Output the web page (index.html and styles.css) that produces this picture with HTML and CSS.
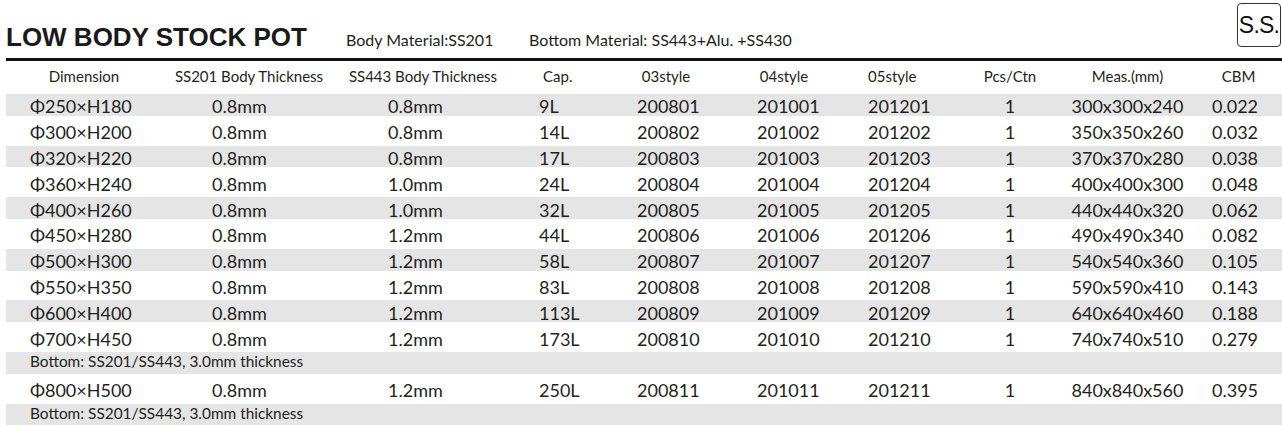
FILE: index.html
```html
<!DOCTYPE html>
<html lang="en">
<head>
    <meta charset="UTF-8">
    <title>Low Body Stock Pot</title>
    <link rel="stylesheet" href="styles.css">
</head>
<body>
    <div class="sheet">
        <!-- title bar -->
        <header class="title-bar">
            <h1 class="title">LOW BODY STOCK POT</h1>
            <span class="spec spec-body">Body Material:SS201</span>
            <span class="spec">Bottom Material: SS443+Alu. +SS430</span>
            <div class="badge">S.S.</div>
        </header>

        <!-- table head -->
        <div class="grid head">
            <div>Dimension</div>
            <div>SS201 Body Thickness</div>
            <div>SS443 Body Thickness</div>
            <div>Cap.</div>
            <div>03style</div>
            <div>04style</div>
            <div>05style</div>
            <div>Pcs/Ctn</div>
            <div>Meas.(mm)</div>
            <div>CBM</div>
        </div>

        <!-- table rows -->
        <div class="rows">
            <div class="grid row">
                <div>Φ250×H180</div><div>0.8mm</div><div>0.8mm</div><div>9L</div><div>200801</div>
                <div>201001</div><div>201201</div><div>1</div><div>300x300x240</div><div>0.022</div>
            </div>
            <div class="grid row">
                <div>Φ300×H200</div><div>0.8mm</div><div>0.8mm</div><div>14L</div><div>200802</div>
                <div>201002</div><div>201202</div><div>1</div><div>350x350x260</div><div>0.032</div>
            </div>
            <div class="grid row">
                <div>Φ320×H220</div><div>0.8mm</div><div>0.8mm</div><div>17L</div><div>200803</div>
                <div>201003</div><div>201203</div><div>1</div><div>370x370x280</div><div>0.038</div>
            </div>
            <div class="grid row">
                <div>Φ360×H240</div><div>0.8mm</div><div>1.0mm</div><div>24L</div><div>200804</div>
                <div>201004</div><div>201204</div><div>1</div><div>400x400x300</div><div>0.048</div>
            </div>
            <div class="grid row">
                <div>Φ400×H260</div><div>0.8mm</div><div>1.0mm</div><div>32L</div><div>200805</div>
                <div>201005</div><div>201205</div><div>1</div><div>440x440x320</div><div>0.062</div>
            </div>
            <div class="grid row">
                <div>Φ450×H280</div><div>0.8mm</div><div>1.2mm</div><div>44L</div><div>200806</div>
                <div>201006</div><div>201206</div><div>1</div><div>490x490x340</div><div>0.082</div>
            </div>
            <div class="grid row">
                <div>Φ500×H300</div><div>0.8mm</div><div>1.2mm</div><div>58L</div><div>200807</div>
                <div>201007</div><div>201207</div><div>1</div><div>540x540x360</div><div>0.105</div>
            </div>
            <div class="grid row">
                <div>Φ550×H350</div><div>0.8mm</div><div>1.2mm</div><div>83L</div><div>200808</div>
                <div>201008</div><div>201208</div><div>1</div><div>590x590x410</div><div>0.143</div>
            </div>
            <div class="grid row">
                <div>Φ600×H400</div><div>0.8mm</div><div>1.2mm</div><div>113L</div><div>200809</div>
                <div>201009</div><div>201209</div><div>1</div><div>640x640x460</div><div>0.188</div>
            </div>
            <div class="grid row">
                <div>Φ700×H450</div><div>0.8mm</div><div>1.2mm</div><div>173L</div><div>200810</div>
                <div>201010</div><div>201210</div><div>1</div><div>740x740x510</div><div>0.279</div>
            </div>
            <div class="note">Bottom: SS201/SS443, 3.0mm thickness</div>
            <div class="grid row">
                <div>Φ800×H500</div><div>0.8mm</div><div>1.2mm</div><div>250L</div><div>200811</div>
                <div>201011</div><div>201211</div><div>1</div><div>840x840x560</div><div>0.395</div>
            </div>
            <div class="note">Bottom: SS201/SS443, 3.0mm thickness</div>
        </div>
    </div>
</body>
</html>
```

FILE: styles.css
```css
/* base */
* {
    margin: 0;
    padding: 0;
    box-sizing: border-box;
}

body {
    font-family: Lato, 'Open Sans', sans-serif;
    color: #231f20;
    background: #fff;
}

.sheet {
    width: 1282px;
    padding-left: 6px;
}

/* title bar */
.title-bar {
    display: flex;
    align-items: baseline;
    height: 61px;
    border-bottom: 3px solid #111;
}

.title {
    width: 340px;
    flex-shrink: 0;
    margin-top: 22px;
    font-family: 'Liberation Sans', Arial, sans-serif;
    font-weight: 700;
    font-size: 26px;
    line-height: 30px;
    color: #1a1a1a;
}

.spec {
    font-size: 16px;
}

.spec-body {
    width: 183px;
    flex-shrink: 0;
}

.badge {
    align-self: flex-start;
    margin: 3px 1px 0 auto;
    width: 44px;
    height: 44px;
    padding-top: 10px;
    border: 1.5px solid #333;
    border-radius: 4px;
    font-family: 'Liberation Sans', Arial, sans-serif;
    font-size: 23px;
    line-height: 23px;
    letter-spacing: -0.8px;
    text-align: center;
    color: #111;
}

/* table */
.grid {
    display: grid;
    grid-template-columns: 156px 174px 174px 96px 120px 116px 118px 100px 135px 87px;
}

.head {
    height: 33px;
    padding-top: 6px;
    font-size: 15px;
    line-height: 18px;
    text-align: center;
}

.head > :nth-child(4) { text-align: left; padding-left: 33px; }
.head > :nth-child(7) { text-align: left; padding-left: 26px; }

.rows {
    display: flex;
    flex-direction: column;
    gap: 4px;
}

.rows > :nth-child(odd) {
    background: #e5e5e5;
}

.row {
    height: 21.8px;
    padding-top: 3.4px;
    font-size: 18px;
    line-height: 18px;
    white-space: nowrap;
}

.row > :nth-child(1) { padding-left: 24px; }
.row > :nth-child(2) { padding-left: 50px; }
.row > :nth-child(3) { padding-left: 52px; }
.row > :nth-child(4) { padding-left: 29px; }
.row > :nth-child(5) { padding-left: 31px; }
.row > :nth-child(6) { padding-left: 31px; }
.row > :nth-child(7) { padding-left: 26px; }
.row > :nth-child(8) { text-align: center; }
.row > :nth-child(9) { text-align: center; }
.row > :nth-child(10) { padding-left: 17px; }

.note {
    height: 21.8px;
    padding-left: 24px;
    font-size: 15.4px;
    line-height: 19px;
}
```
